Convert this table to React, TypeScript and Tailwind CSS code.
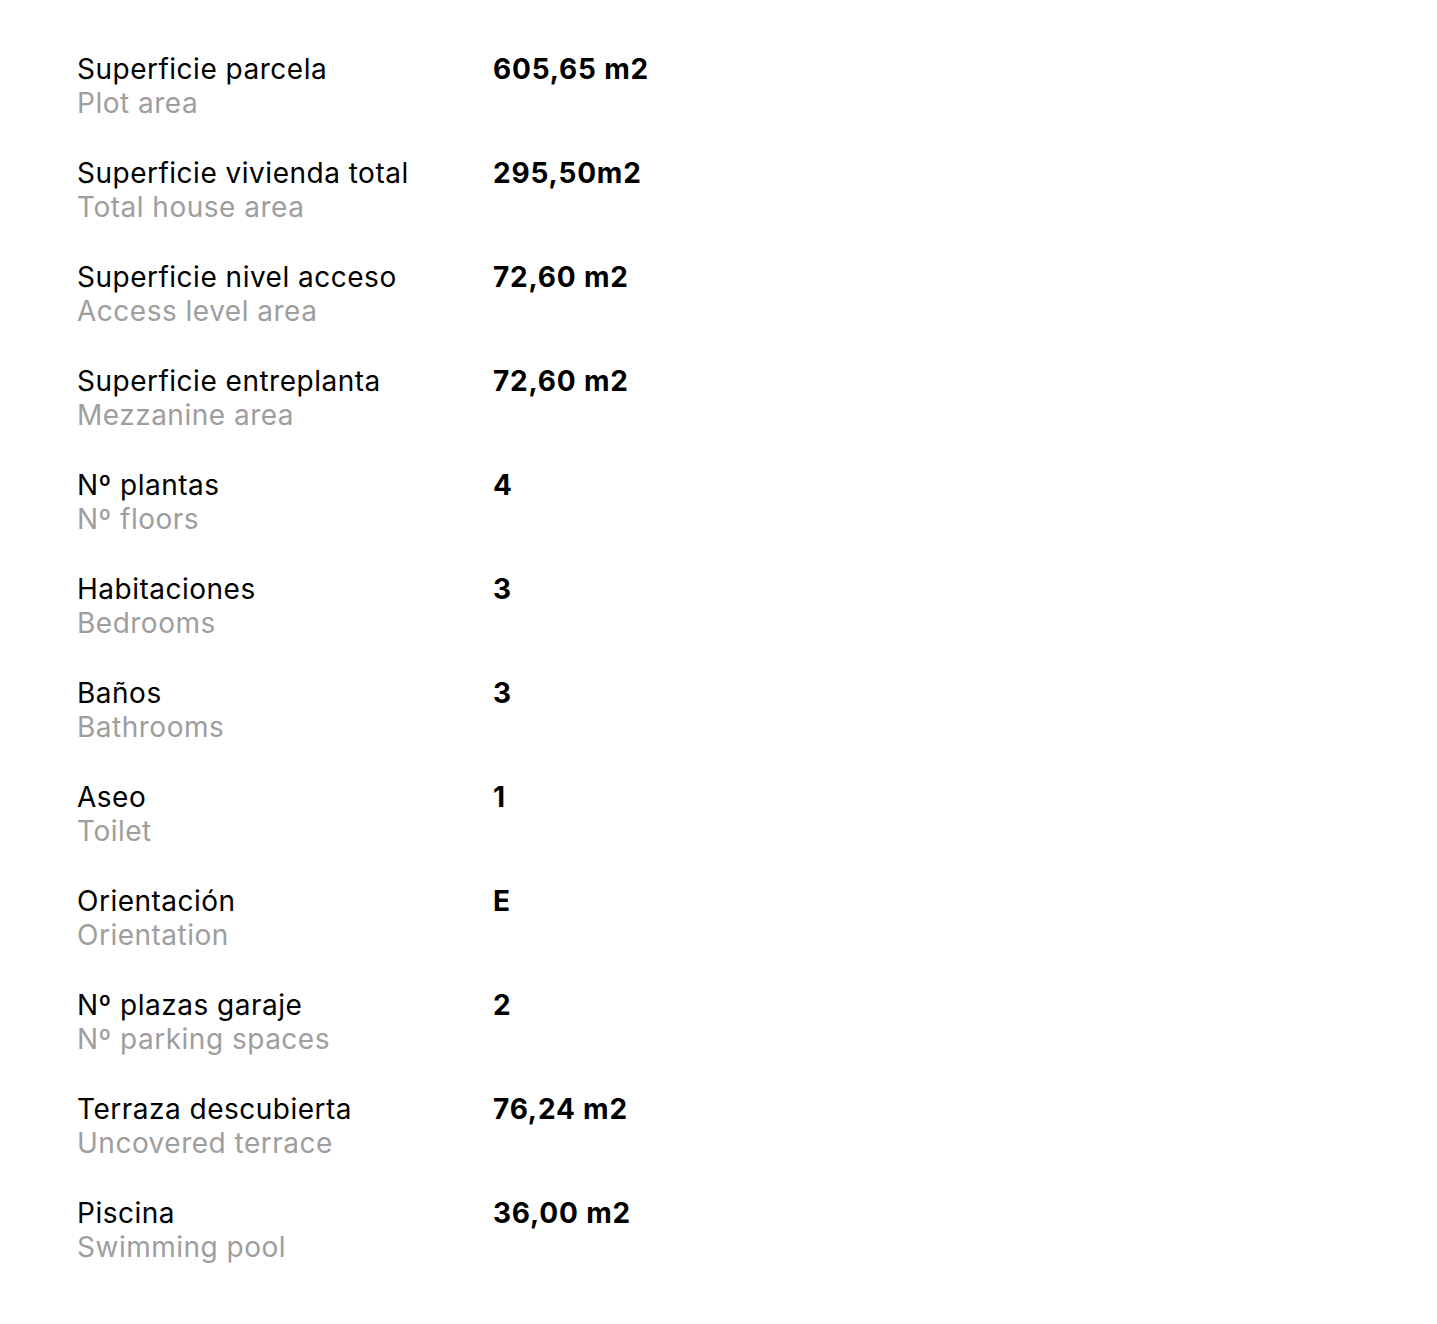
const rows = [
  { es: "Superficie parcela", en: "Plot area", value: "605,65 m2" },
  { es: "Superficie vivienda total", en: "Total house area", value: "295,50m2" },
  { es: "Superficie nivel acceso", en: "Access level area", value: "72,60 m2" },
  { es: "Superficie entreplanta", en: "Mezzanine area", value: "72,60 m2" },
  { es: "Nº plantas", en: "Nº floors", value: "4" },
  { es: "Habitaciones", en: "Bedrooms", value: "3" },
  { es: "Baños", en: "Bathrooms", value: "3" },
  { es: "Aseo", en: "Toilet", value: "1" },
  { es: "Orientación", en: "Orientation", value: "E" },
  { es: "Nº plazas garaje", en: "Nº parking spaces", value: "2" },
  { es: "Terraza descubierta", en: "Uncovered terrace", value: "76,24 m2" },
  { es: "Piscina", en: "Swimming pool", value: "36,00 m2" },
]

export default function App() {
  return (
    <div className="min-h-[1324px] bg-white pl-[77px] pt-[52px] font-['Inter',sans-serif] text-[28px] leading-[34px] tracking-[0.5px]">
      <dl className="flex flex-col gap-[36px]">
        {rows.map((row) => (
          <div key={row.es} className="grid grid-cols-[416px_1fr]">
            <dt>
              <div className="text-black">{row.es}</div>
              <div className="text-[#9e9e9e]">{row.en}</div>
            </dt>
            <dd className="font-bold tracking-[0.8px] text-black">{row.value}</dd>
          </div>
        ))}
      </dl>
    </div>
  )
}
